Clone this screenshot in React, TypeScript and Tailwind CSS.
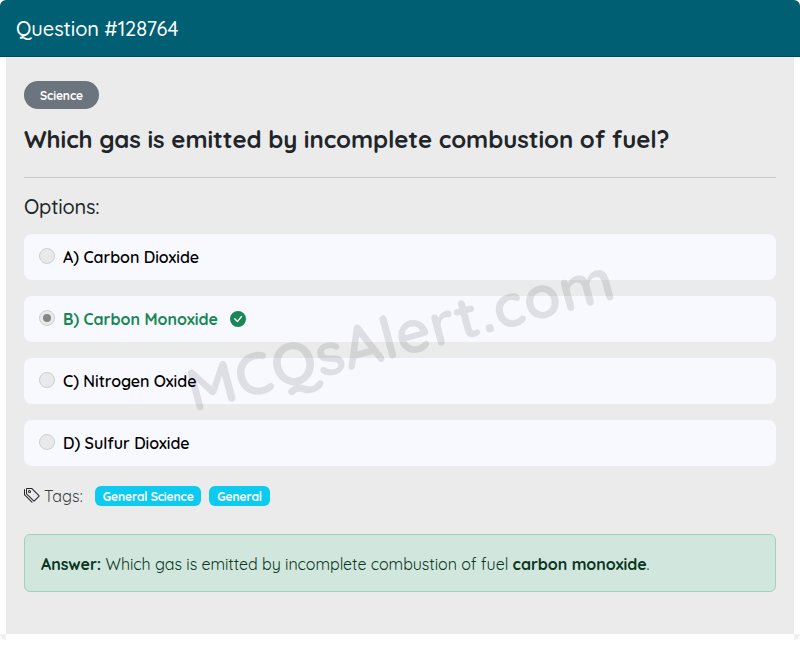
import React from 'react'
import { BsCheckCircleFill, BsTags } from 'react-icons/bs'

const options = [
    { label: 'A) Carbon Dioxide' },
    { label: 'B) Carbon Monoxide', correct: true },
    { label: 'C) Nitrogen Oxide' },
    { label: 'D) Sulfur Dioxide' },
]

const Radio = ({ checked }: { checked?: boolean }) => (
    <span className="-mt-0.5 flex size-4 shrink-0 items-center justify-center rounded-full border border-[#cfcfd1] bg-[#e9e9eb]">
        {checked && <span className="size-2 rounded-full bg-[#858585]" />}
    </span>
)

const Tag = ({ children }: { children: React.ReactNode }) => (
    <span className="flex h-5 items-center rounded-md bg-[#0dcaf0] px-[7.8px] pt-0.5 text-xs font-bold tracking-[-0.12px] whitespace-nowrap text-white">
        {children}
    </span>
)

export default function App() {
    return (
        <div className="h-[665px] w-full overflow-hidden bg-white font-['Quicksand','Lato',sans-serif] text-[#212529]">
            <header className="flex h-[57px] items-center rounded-t-md border-b border-[#004a5c] bg-[#005f73] px-4 pt-0.5">
                <h1 className="text-xl leading-6 font-medium tracking-[-0.06px] text-white">Question #128764</h1>
            </header>

            <main className="relative mx-1.5 h-[577px] bg-[#ebebeb] px-[18px] pt-6">
                <span className="flex h-7 w-[75px] items-center justify-center rounded-full bg-[#6c757d] pt-0.5 text-xs font-bold tracking-[-0.12px] text-white">
                    Science
                </span>

                <h2 className="mt-4 text-2xl leading-[29px] font-bold tracking-[-0.065px] whitespace-nowrap">
                    Which gas is emitted by incomplete combustion of fuel?
                </h2>

                <hr className="mt-[23px] border-[#c9cacb]" />

                <h3 className="mt-[17px] text-xl leading-6 font-medium tracking-[-0.18px]">Options:</h3>

                <ul className="mt-[15px] space-y-4">
                    {options.map((option) => (
                        <li key={option.label} className="flex h-[46px] items-center rounded-lg bg-[#f8f9ff] pl-[15px]">
                            <Radio checked={option.correct} />
                            <span
                                className={`ml-2 text-base tracking-[-0.03px] ${option.correct ? 'font-bold text-[#198754]' : 'font-semibold text-black'}`}
                            >
                                {option.label}
                            </span>
                            {option.correct && <BsCheckCircleFill className="ml-3 size-4 text-[#198754]" />}
                        </li>
                    ))}
                </ul>

                <div className="mt-[18px] flex h-6 items-center">
                    <BsTags className="-mt-0.5 size-4" />
                    <span className="ml-1 w-[51px] text-base tracking-[0.15px] text-[#212529]/90">Tags:</span>
                    <div className="flex gap-2">
                        <Tag>General Science</Tag>
                        <Tag>General</Tag>
                    </div>
                </div>

                <div className="mt-[26px] flex h-[58px] items-center rounded-md border border-[#a3cfbb] bg-[#d1e7dd] px-4 pt-0.5 text-[#0a3622]">
                    <p className="text-base tracking-[-0.045px] whitespace-nowrap">
                        <strong className="font-bold">Answer:</strong> Which gas is emitted by incomplete combustion of fuel{' '}
                        <strong className="font-bold">carbon monoxide</strong>.
                    </p>
                </div>

                {/* Watermark */}
                <div className="pointer-events-none absolute inset-x-0 top-0 flex h-[553px] items-center justify-center">
                    <span className="-rotate-15 text-[60px] leading-none font-bold whitespace-nowrap text-black/10">
                        MCQsAlert.com
                    </span>
                </div>
            </main>

            <footer className="flex justify-between">
                <span className="size-1.5 rounded-bl-md bg-[#f0f0f0]" />
                <span className="size-1.5 rounded-br-md bg-[#f0f0f0]" />
            </footer>
        </div>
    )
}
